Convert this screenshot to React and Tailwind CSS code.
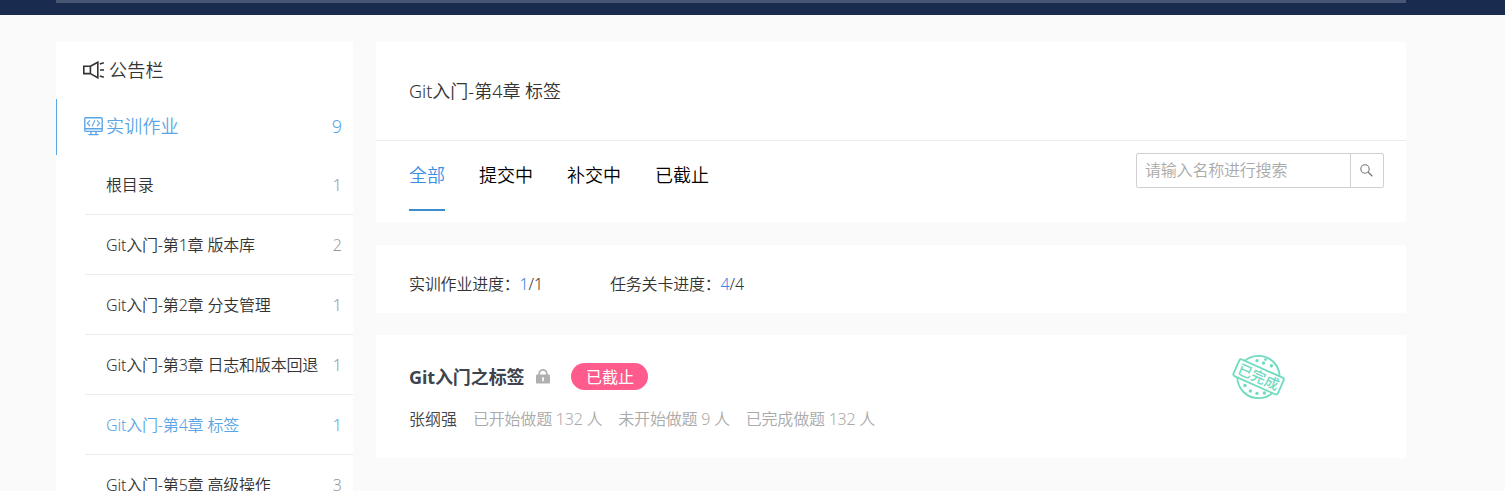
import React from "react";

const chapters = [
  { name: "根目录", count: 1 },
  { name: "Git入门-第1章 版本库", count: 2 },
  { name: "Git入门-第2章 分支管理", count: 1 },
  { name: "Git入门-第3章 日志和版本回退", count: 1 },
  { name: "Git入门-第4章 标签", count: 1, active: true },
  { name: "Git入门-第5章 高级操作", count: 3 },
];

const tabs = [
  { name: "全部", active: true },
  { name: "提交中" },
  { name: "补交中" },
  { name: "已截止" },
];

function SpeakerIcon() {
  return (
    <svg width="22" height="18" viewBox="0 0 22 18" fill="none" stroke="currentColor" strokeWidth="1.6">
      <path d="M0.8 5.2H7.4V12.6H0.8ZM7.4 5.2L14.8 1.2V16.8L7.4 12.6" />
      <path d="M16.8 3L20.8 1.8M17 9H21M16.8 15L20.8 16.2" />
    </svg>
  );
}

function MonitorIcon() {
  return (
    <svg width="19" height="19" viewBox="0 0 19 19" fill="none" stroke="currentColor" strokeWidth="1.4">
      <rect x="0.8" y="0.8" width="17.4" height="13.6" rx="1" />
      <path d="M1 11.8H18M7 14.2V17M12 14.2V17M4.4 17.6H14.6" />
      <path d="M6 3.4L3.3 6.2L6 9M13 3.4L15.7 6.2L13 9M11 3.2L8 9.2" strokeWidth="1.1" />
    </svg>
  );
}

function LockIcon() {
  return (
    <svg width="14" height="15" viewBox="0 0 14 15">
      <path d="M3.2 7V4.6a3.8 3.8 0 0 1 7.6 0V7" fill="none" stroke="#b0b0b0" strokeWidth="1.7" />
      <rect x="0" y="5.4" width="14" height="9.2" rx="1.2" fill="#b0b0b0" />
      <path d="M7 8.8V11.4" stroke="#fff" strokeWidth="1.7" strokeLinecap="round" />
    </svg>
  );
}

function SearchIcon() {
  return (
    <svg width="13" height="13" viewBox="0 0 13 13" fill="none" stroke="#777" strokeWidth="1.1">
      <circle cx="5" cy="5" r="4.2" />
      <path d="M8 8L12.3 12.3" strokeWidth="1.3" />
    </svg>
  );
}

function DoneStamp() {
  return (
    <svg width="54" height="48" viewBox="0 0 54 48" fill="none" stroke="#6edbc0">
      <circle cx="26.5" cy="24" r="21.2" strokeWidth="1.8" />
      <g fill="#6edbc0" stroke="none">
        <circle cx="25" cy="7.6" r="1.7" />
        <circle cx="31.5" cy="10" r="1.7" />
        <circle cx="33.5" cy="6.6" r="1.4" />
        <circle cx="39.4" cy="12.8" r="1.7" />
        <circle cx="13" cy="32.5" r="1.7" />
        <circle cx="18.4" cy="38" r="1.7" />
        <circle cx="25" cy="40.4" r="1.7" />
        <circle cx="32.4" cy="40" r="1.7" />
      </g>
      <g transform="rotate(24 26.5 24)">
        <rect x="2.2" y="14.8" width="48.6" height="18.2" rx="2" fill="#fff" strokeWidth="1.8" />
        <text
          x="26.5"
          y="29.2"
          textAnchor="middle"
          fill="#6edbc0"
          stroke="none"
          className="font-['Noto_Sans_CJK_SC',sans-serif] text-[14.5px] font-medium"
        >
          已完成
        </text>
      </g>
    </svg>
  );
}

function Sidebar() {
  return (
    <aside className="w-[297px] shrink-0 bg-white">
      <div className="flex h-14 items-center pl-[27px] text-lg text-[#333]">
        <SpeakerIcon />
        <span className="ml-1 tracking-[0.2px]">公告栏</span>
      </div>
      <div className="mt-px flex h-14 items-center border-l border-[#5aa5e6] pr-[11px] pb-0.5 pl-[27px] text-lg text-[#5aa5e6]">
        <MonitorIcon />
        <span className="ml-[3px] tracking-[0.2px]">实训作业</span>
        <span className="ml-auto">9</span>
      </div>
      <ul className="ml-[29px]">
        {chapters.map((c) => (
          <li
            key={c.name}
            className={
              "flex h-15 items-center justify-between border-b border-[#ebebeb] pr-[11px] pl-[21px] text-base " +
              (c.active ? "text-[#5aa5e6]" : "text-[#333]")
            }
          >
            <span className="tracking-[-0.18px] whitespace-nowrap">{c.name}</span>
            <span className={c.active ? "text-[#5aa5e6]" : "text-[#999]"}>{c.count}</span>
          </li>
        ))}
      </ul>
    </aside>
  );
}

export default function App() {
  return (
    <div className="h-[491px] overflow-hidden bg-[#fafafa] font-['Noto_Sans','Noto_Sans_CJK_SC',sans-serif] font-[350]">
      <header className="h-[15px] bg-[#192c50]">
        <div className="ml-14 h-[3px] w-[1350px] bg-[#475672]" />
      </header>
      <div className="mt-[27px] ml-14 flex w-[1350px] gap-[23px]">
        <Sidebar />
        <main className="flex-1">
          <section className="h-[180px] bg-white">
            <h1 className="flex h-[99px] items-center border-b border-[#ebebeb] pl-[33px] text-lg font-[350] text-[#333]">
              Git入门-第4章 标签
            </h1>
            <div className="flex items-start justify-between pr-[22px] pl-[33px]">
              <nav className="flex gap-[34px] text-lg text-black">
                {tabs.map((t) => (
                  <span
                    key={t.name}
                    className={
                      "flex h-[70px] items-center border-b-2 " +
                      (t.active ? "border-[#3a8ccc] text-[#3a8ee6]" : "border-transparent")
                    }
                  >
                    {t.name}
                  </span>
                ))}
              </nav>
              <div className="mt-3 flex h-[35px] w-[248px] rounded-[2px] border border-[#d0d0d0]">
                <span className="flex flex-1 items-center pb-px pl-2 text-base tracking-[-0.2px] text-[#aaa]">
                  请输入名称进行搜索
                </span>
                <span className="flex w-[33px] items-center justify-center border-l border-[#d0d0d0] pr-px">
                  <SearchIcon />
                </span>
              </div>
            </div>
          </section>
          <section className="mt-[23px] flex h-[68px] items-center bg-white pt-[9px] pl-[33px] text-base tracking-[-0.2px] text-[#333]">
            <p className="w-[201px]">
              实训作业进度：<span className="text-[#3a84e6]">1</span>/1
            </p>
            <p>
              任务关卡进度：<span className="text-[#3a84e6]">4</span>/4
            </p>
          </section>
          <section className="mt-[22px] flex h-[123px] justify-between bg-white pr-[120px] pl-[33px]">
            <div className="pt-7">
              <div className="flex h-[27px] items-center">
                <h2 className="text-lg font-bold tracking-[-0.1px] text-[#3d444d]">Git入门之标签</h2>
                <span className="ml-[12px]">
                  <LockIcon />
                </span>
                <span className="ml-[21px] flex h-[27px] w-[77px] items-center justify-center rounded-full bg-[#ff5b8d] text-base font-normal text-white">
                  已截止
                </span>
              </div>
              <div className="mt-[17px] flex gap-4 text-base tracking-[-0.22px] text-[#aaa]">
                <span className="tracking-normal text-[#444]">张纲强</span>
                <span>已开始做题 132 人</span>
                <span>未开始做题 9 人</span>
                <span>已完成做题 132 人</span>
              </div>
            </div>
            <div className="pt-[18px]">
              <DoneStamp />
            </div>
          </section>
        </main>
      </div>
    </div>
  );
}
